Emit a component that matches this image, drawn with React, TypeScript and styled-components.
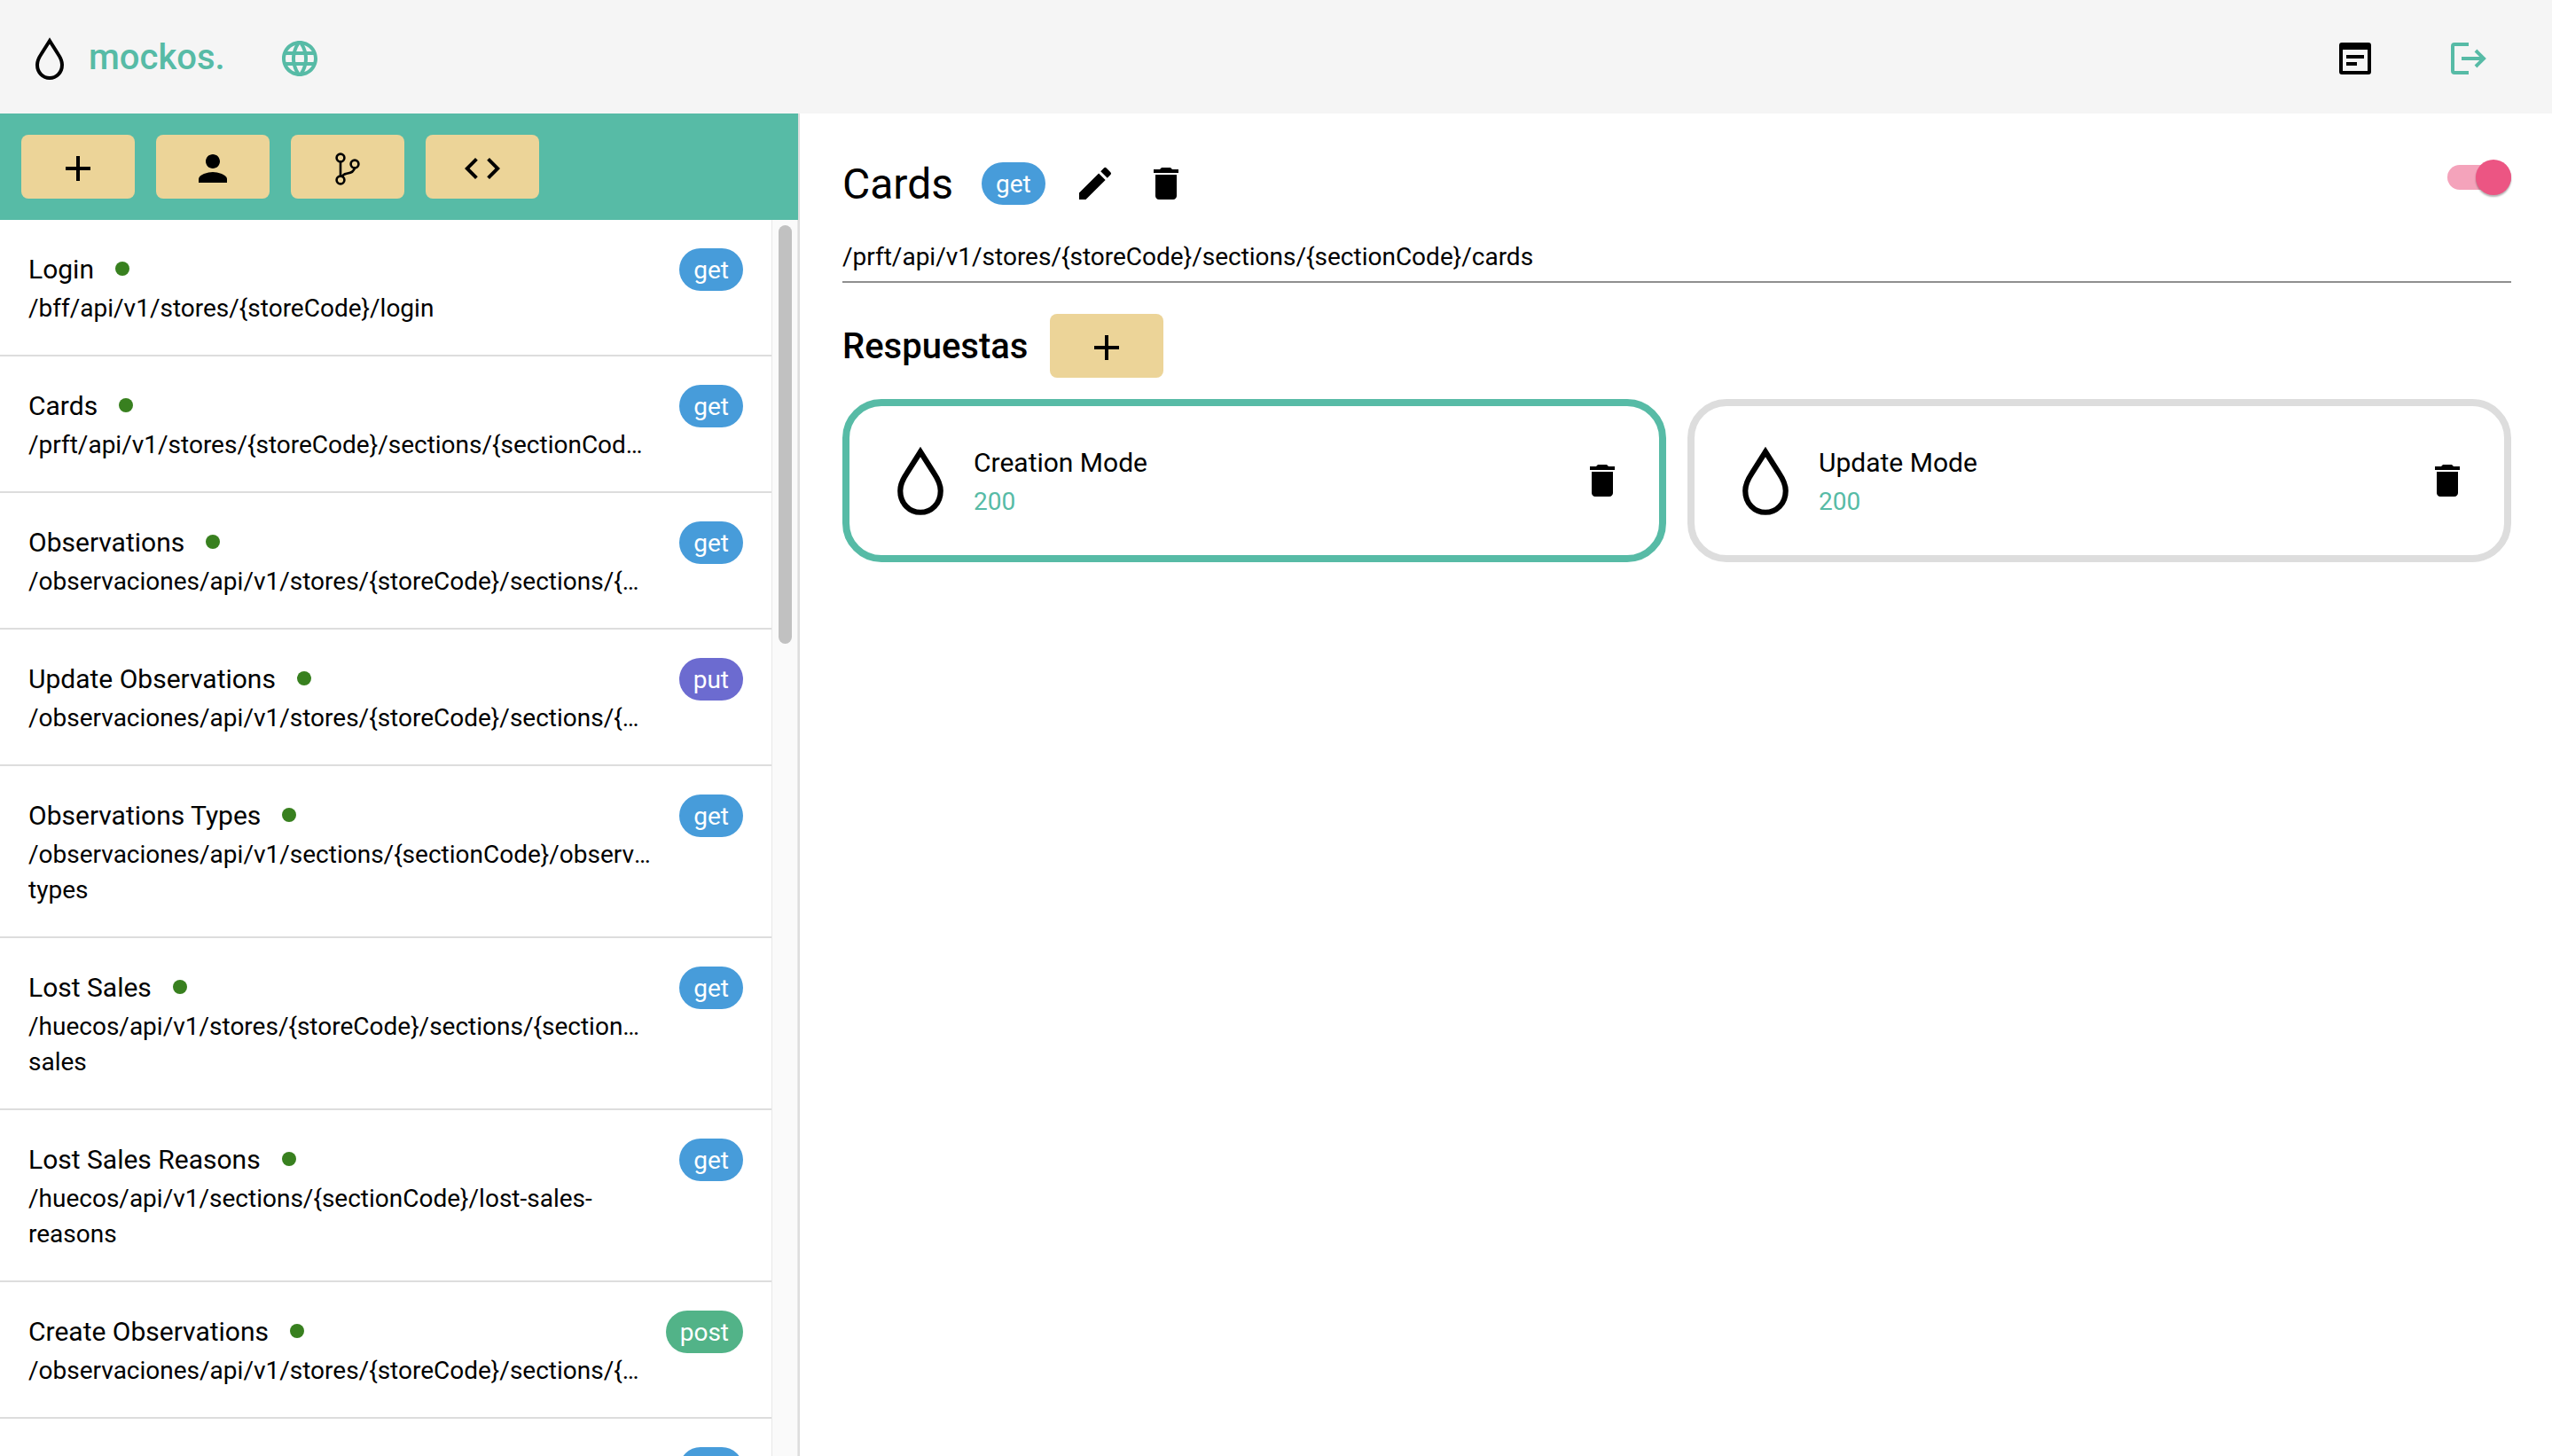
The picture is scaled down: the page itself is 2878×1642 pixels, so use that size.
import styled, { createGlobalStyle } from "styled-components";
import { MdAdd, MdCode, MdDelete, MdEdit, MdLanguage, MdPerson } from "react-icons/md";

const teal = "#57bba6";
const sand = "#ecd498";

const GlobalStyle = createGlobalStyle`
  html, body {
    margin: 0;
    height: 100%;
    background: #fff;
    font-family: Roboto, "Liberation Sans", sans-serif;
    color: #000;
  }
  * {
    box-sizing: border-box;
  }
`;

const Page = styled.div`
  width: 2878px;
  height: 1642px;
  display: flex;
  flex-direction: column;
  overflow: hidden;
`;

const Header = styled.header`
  height: 128px;
  flex: none;
  display: flex;
  align-items: center;
  padding: 4px 74px 0 40px;
  background: #f5f5f5;
`;

const Brand = styled.span`
  margin: 0 60px 4px 28px;
  font-size: 40px;
  font-weight: 500;
  color: ${teal};
`;

const HeaderActions = styled.div`
  margin-left: auto;
  display: flex;
  align-items: center;
  gap: 90px;
`;

const Body = styled.div`
  flex: 1;
  min-height: 0;
  display: flex;
`;

const Sidebar = styled.aside`
  width: 900px;
  flex: none;
  display: flex;
  flex-direction: column;
`;

const Toolbar = styled.div`
  height: 120px;
  flex: none;
  display: flex;
  align-items: center;
  gap: 24px;
  padding: 0 24px;
  background: ${teal};
`;

const SandButton = styled.button`
  width: 128px;
  height: 72px;
  flex: none;
  display: flex;
  align-items: center;
  justify-content: center;
  padding: 4px 0 0;
  border: none;
  border-radius: 8px;
  background: ${sand};
  color: #000;
`;

const ListArea = styled.div`
  flex: 1;
  min-height: 0;
  display: flex;
`;

const List = styled.div`
  flex: 1;
  min-width: 0;
  overflow: hidden;
`;

const Track = styled.div`
  width: 30px;
  flex: none;
  padding: 6px 6px 0 7px;
  background: #fafafa;
  border-left: 1px solid #e8e8e8;
  border-right: 1px solid #e8e8e8;
`;

const Thumb = styled.div`
  height: 472px;
  border-radius: 8px;
  background: #c1c1c1;
`;

const Row = styled.div`
  display: flex;
  align-items: flex-start;
  padding: 32px 32px 32px;
  border-bottom: 2px solid #ddd;
`;

const RowText = styled.div`
  width: 702px;
  flex: none;
`;

const RowTitle = styled.div`
  display: flex;
  align-items: center;
  gap: 24px;
  height: 48px;
  padding-bottom: 2px;
  font-size: 30px;
`;

const Dot = styled.span`
  width: 16px;
  height: 16px;
  border-radius: 50%;
  background: #38801f;
`;

const RowPath = styled.div`
  font-size: 28px;
  line-height: 40px;
  overflow: hidden;
  text-overflow: ellipsis;
`;

const badgeColors: Record<string, string> = {
  get: "#479cda",
  put: "#6c6bd0",
  post: "#52b388",
};

const Badge = styled.span<{ $method: string }>`
  height: 48px;
  flex: none;
  display: flex;
  align-items: center;
  padding: 0 16px;
  border-radius: 24px;
  font-size: 28px;
  color: #fff;
  background: ${(props) => badgeColors[props.$method]};
`;

const RowBadge = styled(Badge)`
  margin-left: auto;
`;

const Main = styled.main`
  flex: 1;
  min-width: 0;
  padding: 0 46px 0 48px;
  border-left: 2px solid #ddd;
`;

const TitleRow = styled.div`
  height: 140px;
  display: flex;
  align-items: center;
  padding-top: 48px;
  padding-bottom: 30px;
`;

const Title = styled.h1`
  margin: 0 32px 0 0;
  font-size: 48px;
  font-weight: 400;
`;

const IconGroup = styled.div`
  display: flex;
  align-items: center;
  margin-left: 32px;
  gap: 32px;
`;

const Toggle = styled.div`
  margin-left: auto;
  margin-bottom: 14px;
  position: relative;
  width: 72px;
  height: 28px;
  border-radius: 14px;
  background: #f4a3bb;
`;

const ToggleKnob = styled.span`
  position: absolute;
  right: 0;
  top: -6px;
  width: 40px;
  height: 40px;
  border-radius: 50%;
  background: #ec5583;
  box-shadow: 0 2px 2px rgba(0, 0, 0, 0.3);
`;

const PathLine = styled.div`
  font-size: 28px;
  line-height: 44px;
  padding-bottom: 5px;
  border-bottom: 2px solid #8f8f8f;
`;

const SectionRow = styled.div`
  display: flex;
  align-items: center;
  gap: 25px;
  margin-top: 35px;
`;

const SectionTitle = styled.h2`
  margin: 0;
  font-size: 40px;
  font-weight: 500;
`;

const Cards = styled.div`
  display: grid;
  grid-template-columns: 1fr 1fr;
  gap: 24px;
  margin-top: 24px;
`;

const Card = styled.div<{ $active?: boolean }>`
  height: 184px;
  display: flex;
  align-items: center;
  padding: 0 40px 0 54px;
  border: 8px solid ${(props) => (props.$active ? teal : "#ddd")};
  border-radius: 44px;
`;

const CardText = styled.div`
  flex: 1;
  margin: 2px 0 0 34px;
`;

const CardTitle = styled.div`
  font-size: 30px;
  line-height: 44px;
`;

const CardCode = styled.div`
  font-size: 28px;
  line-height: 40px;
  margin-top: 2px;
  color: ${teal};
`;

function Drop({ width, height, stroke }: { width: number; height: number; stroke: number }) {
  return (
    <svg width={width} height={height} viewBox="0 0 32 48" fill="none" stroke="currentColor" strokeWidth={stroke} style={{ flex: "none" }}>
      <path d="M16 4 L6.5 19 C3.5 23.5 2 27 2 31 C2 40 8.5 46 16 46 C23.5 46 30 40 30 31 C30 27 28.5 23.5 25.5 19 Z" strokeMiterlimit={8} />
    </svg>
  );
}

function BranchIcon() {
  return (
    <svg width="28" height="37" viewBox="0 0 28 37" fill="none" stroke="#000" strokeWidth="2.6">
      <circle cx="6" cy="6" r="4.4" />
      <circle cx="22" cy="13" r="4.4" />
      <circle cx="6" cy="31" r="4.4" />
      <path d="M6 10.4 V26.6 M8 27 C9 24 12 24 14 23.5 C18 23 21 21.5 22 17.4" />
    </svg>
  );
}

function PanelIcon() {
  return (
    <svg width="36" height="36" viewBox="0 0 36 36" fill="#000">
      <path
        fillRule="evenodd"
        d="M3 0 H33 A3 3 0 0 1 36 3 V33 A3 3 0 0 1 33 36 H3 A3 3 0 0 1 0 33 V3 A3 3 0 0 1 3 0 Z M4 8 V32 H32 V8 Z M8 14 H28 V18 H8 Z M8 22 H20 V26 H8 Z"
      />
    </svg>
  );
}

function LogoutIcon() {
  return (
    <svg width="40" height="36" viewBox="0 0 40 36" fill="none" stroke={teal} strokeWidth="4">
      <path d="M20 2 H4 A2 2 0 0 0 2 4 V32 A2 2 0 0 0 4 34 H20" />
      <path d="M12 18 H37 M28 9 L37 18 L28 27" />
    </svg>
  );
}

const endpoints = [
  { name: "Login", method: "get", path: "/bff/api/v1/stores/{storeCode}/login" },
  { name: "Cards", method: "get", path: "/prft/api/v1/stores/{storeCode}/sections/{sectionCode}/cards" },
  { name: "Observations", method: "get", path: "/observaciones/api/v1/stores/{storeCode}/sections/{sectionCode}/observations" },
  { name: "Update Observations", method: "put", path: "/observaciones/api/v1/stores/{storeCode}/sections/{sectionCode}/observations" },
  { name: "Observations Types", method: "get", path: "/observaciones/api/v1/sections/{sectionCode}/observations-types" },
  { name: "Lost Sales", method: "get", path: "/huecos/api/v1/stores/{storeCode}/sections/{sectionCode}/lost-sales" },
  { name: "Lost Sales Reasons", method: "get", path: "/huecos/api/v1/sections/{sectionCode}/lost-sales-reasons" },
  { name: "Create Observations", method: "post", path: "/observaciones/api/v1/stores/{storeCode}/sections/{sectionCode}/observations" },
];

export default function App() {
  return (
    <Page>
      <GlobalStyle />
      <Header>
        <Drop width={32} height={48} stroke={4} />
        <Brand>mockos.</Brand>
        <MdLanguage size={48} color={teal} />
        <HeaderActions>
          <PanelIcon />
          <LogoutIcon />
        </HeaderActions>
      </Header>
      <Body>
        <Sidebar>
          <Toolbar>
            <SandButton>
              <MdAdd size={48} />
            </SandButton>
            <SandButton>
              <MdPerson size={48} />
            </SandButton>
            <SandButton>
              <BranchIcon />
            </SandButton>
            <SandButton>
              <MdCode size={48} />
            </SandButton>
          </Toolbar>
          <ListArea>
            <List>
              {endpoints.map((item) => (
                <Row key={item.name}>
                  <RowText>
                    <RowTitle>
                      {item.name}
                      <Dot />
                    </RowTitle>
                    <RowPath>{item.path}</RowPath>
                  </RowText>
                  <RowBadge $method={item.method}>{item.method}</RowBadge>
                </Row>
              ))}
              <Row>
                <RowText />
                <RowBadge $method="get">get</RowBadge>
              </Row>
            </List>
            <Track>
              <Thumb />
            </Track>
          </ListArea>
        </Sidebar>
        <Main>
          <TitleRow>
            <Title>Cards</Title>
            <Badge $method="get">get</Badge>
            <IconGroup>
              <MdEdit size={48} />
              <MdDelete size={48} />
            </IconGroup>
            <Toggle>
              <ToggleKnob />
            </Toggle>
          </TitleRow>
          <PathLine>/prft/api/v1/stores/{"{storeCode}"}/sections/{"{sectionCode}"}/cards</PathLine>
          <SectionRow>
            <SectionTitle>Respuestas</SectionTitle>
            <SandButton>
              <MdAdd size={48} />
            </SandButton>
          </SectionRow>
          <Cards>
            <Card $active>
              <Drop width={52} height={78} stroke={3.8} />
              <CardText>
                <CardTitle>Creation Mode</CardTitle>
                <CardCode>200</CardCode>
              </CardText>
              <MdDelete size={48} />
            </Card>
            <Card>
              <Drop width={52} height={78} stroke={3.8} />
              <CardText>
                <CardTitle>Update Mode</CardTitle>
                <CardCode>200</CardCode>
              </CardText>
              <MdDelete size={48} />
            </Card>
          </Cards>
        </Main>
      </Body>
    </Page>
  );
}
